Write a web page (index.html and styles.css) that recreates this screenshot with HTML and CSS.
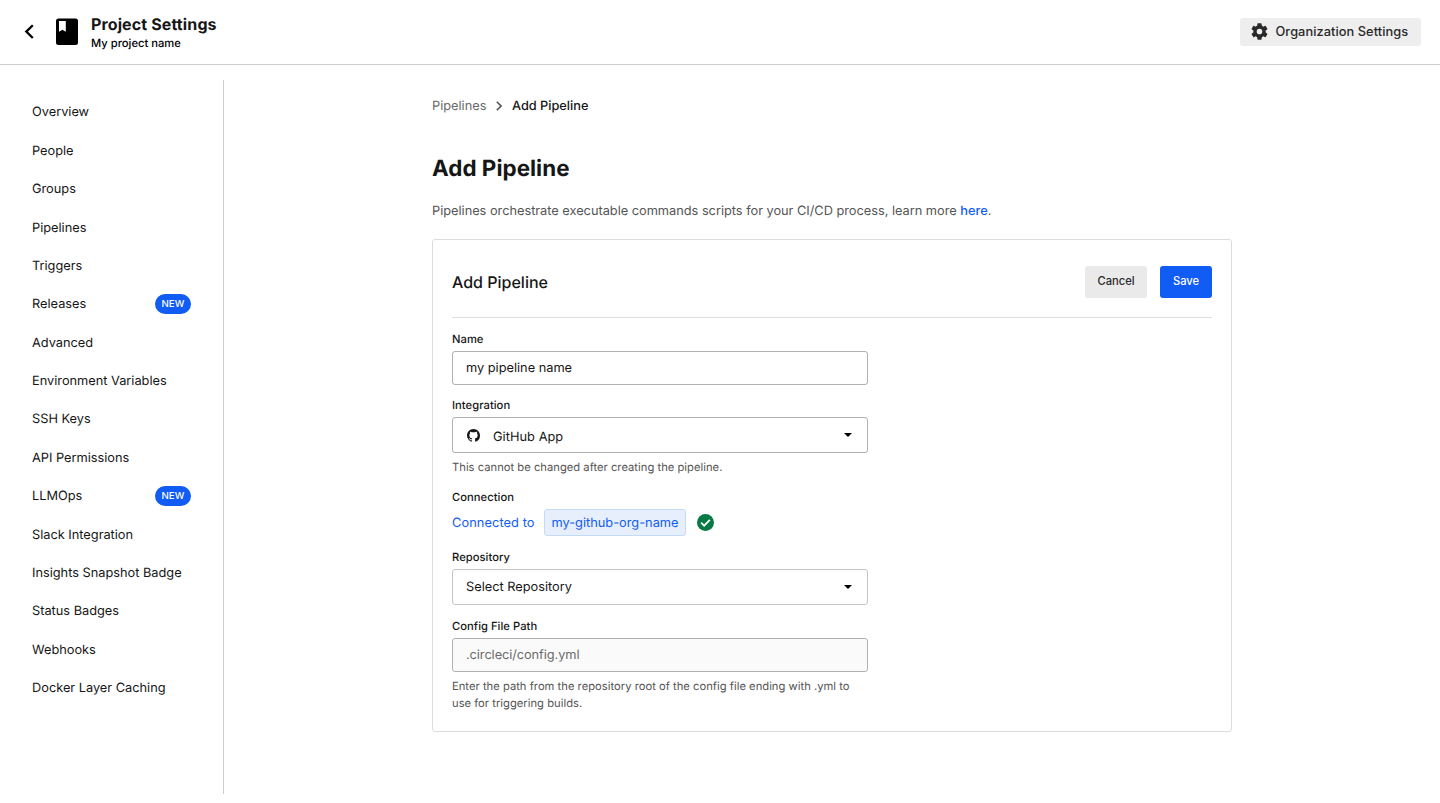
FILE: index.html
```html
<!DOCTYPE html>
<html lang="en">
<head>
<meta charset="utf-8">
<title>Project Settings</title>
<link rel="stylesheet" href="styles.css">
</head>
<body>
<header class="topbar">
  <svg class="back" viewBox="0 0 10 16"><path d="M8.800 1.200 2.300 7.600l6.500 6.400" fill="none" stroke="#000" stroke-width="2.300"/></svg>
  <svg class="book" viewBox="0 0 22 27"><path fill-rule="evenodd" d="M2.500.500h17A2.500 2.500 0 0 1 22 3v21.500a2.500 2.500 0 0 1-2.500 2.500h-17A2.500 2.500 0 0 1 0 24.500V3A2.500 2.500 0 0 1 2.500.500zM3 3v10.800l3.400-2.100 3.400 2.100V3z"/></svg>
  <div class="titles">
    <div class="title">Project Settings</div>
    <div class="subtitle">My project name</div>
  </div>
  <button class="org">
    <svg class="gear" viewBox="2 2 20 20"><path fill="#292929" d="M19.140 12.940c.040-.300.060-.610.060-.940 0-.320-.020-.640-.070-.940l2.030-1.580a.490.490 0 0 0 .120-.610l-1.920-3.320a.488.488 0 0 0-.590-.220l-2.390.960c-.500-.380-1.030-.700-1.620-.940l-.360-2.540a.484.484 0 0 0-.480-.410h-3.840c-.240 0-.430.170-.470.410l-.360 2.540c-.590.240-1.130.570-1.620.940l-2.390-.960c-.220-.080-.470 0-.590.220L2.740 8.870c-.120.210-.080.470.120.610l2.030 1.580c-.050.300-.090.630-.090.940s.020.640.070.940l-2.030 1.580a.490.490 0 0 0-.120.610l1.920 3.320c.120.220.370.290.590.220l2.390-.960c.500.380 1.030.700 1.620.940l.360 2.540c.050.240.240.410.480.410h3.840c.240 0 .440-.170.470-.410l.360-2.540c.590-.240 1.130-.560 1.620-.940l2.390.960c.220.080.470 0 .590-.220l1.920-3.320c.120-.220.070-.470-.120-.610l-2.010-1.580zM12 15.300a3.300 3.300 0 1 1 0-6.600 3.300 3.300 0 0 1 0 6.600z"/></svg>
    <span>Organization Settings</span>
  </button>
</header>
<div class="layout">
  <nav class="sidebar">
    <a class="item">Overview</a>
    <a class="item">People</a>
    <a class="item">Groups</a>
    <a class="item">Pipelines</a>
    <a class="item">Triggers</a>
    <a class="item">Releases<span class="badge">NEW</span></a>
    <a class="item">Advanced</a>
    <a class="item">Environment Variables</a>
    <a class="item">SSH Keys</a>
    <a class="item">API Permissions</a>
    <a class="item">LLMOps<span class="badge">NEW</span></a>
    <a class="item">Slack Integration</a>
    <a class="item">Insights Snapshot Badge</a>
    <a class="item">Status Badges</a>
    <a class="item">Webhooks</a>
    <a class="item">Docker Layer Caching</a>
  </nav>
  <main class="main">
    <div class="crumbs">
      <span class="crumb">Pipelines</span>
      <svg class="chevron" viewBox="0 0 6 10"><path d="M.8.800 5 5 .800 9.200" fill="none" stroke="#555" stroke-width="1.600"/></svg>
      <span class="crumb-current">Add Pipeline</span>
    </div>
    <h1 class="heading">Add Pipeline</h1>
    <p class="intro">Pipelines orchestrate executable commands scripts for your CI/CD process, learn more <a class="link">here</a>.</p>
    <section class="card">
      <div class="card-head">
        <h2 class="card-title">Add Pipeline</h2>
        <button class="btn cancel">Cancel</button>
        <button class="btn save">Save</button>
      </div>
      <div class="form">
        <div class="label">Name</div>
        <div class="field">my pipeline name</div>
        <div class="label gap-12">Integration</div>
        <div class="field select strong">
          <svg class="github" viewBox="0 0 16 16"><path fill="#161616" d="M8 0C3.580 0 0 3.580 0 8c0 3.540 2.290 6.530 5.470 7.590.400.070.550-.170.550-.380 0-.190-.010-.820-.010-1.490-2.010.370-2.530-.490-2.690-.940-.090-.230-.480-.940-.820-1.130-.280-.150-.680-.520-.010-.530.630-.010 1.080.580 1.230.820.720 1.210 1.870.870 2.330.660.070-.520.280-.870.510-1.070-1.780-.200-3.640-.890-3.640-3.950 0-.870.310-1.590.820-2.150-.080-.200-.360-1.020.080-2.120 0 0 .670-.210 2.200.820.640-.180 1.320-.270 2-.270s1.360.090 2 .270c1.530-1.040 2.200-.820 2.200-.820.440 1.100.160 1.920.080 2.120.510.560.820 1.270.820 2.150 0 3.070-1.870 3.750-3.650 3.950.290.250.540.730.540 1.480 0 1.070-.010 1.930-.010 2.200 0 .210.150.460.550.380A8.013 8.013 0 0 0 16 8c0-4.420-3.580-8-8-8z"/></svg>
          <span class="value">GitHub App</span>
          <svg class="caret" viewBox="0 0 8 4"><path d="M0 0h8L4 4z"/></svg>
        </div>
        <div class="help one">This cannot be changed after creating the pipeline.</div>
        <div class="label gap-14">Connection</div>
        <div class="connection">
          <span class="connected">Connected to</span>
          <span class="chip">my-github-org-name</span>
          <svg class="check" viewBox="0 0 16 16"><circle cx="8" cy="8" r="8" fill="#067a42"/><path d="m3.900 8.200 2.800 2.800 5.400-5.500" fill="none" stroke="#fff" stroke-width="1.600"/></svg>
        </div>
        <div class="label gap-13">Repository</div>
        <div class="field select">
          <span class="value">Select Repository</span>
          <svg class="caret" viewBox="0 0 8 4"><path d="M0 0h8L4 4z"/></svg>
        </div>
        <div class="label gap-13">Config File Path</div>
        <div class="field placeholder">.circleci/config.yml</div>
        <div class="help">Enter the path from the repository root of the config file ending with .yml to use for triggering builds.</div>
      </div>
    </section>
  </main>
</div>
</body>
</html>
```
FILE: styles.css
```css
* { box-sizing: border-box; }
body {
  margin: 0;
  height: 803px;
  overflow: hidden;
  background: #fff;
  color: #161616;
  font: 12.8px/20px Inter, "Liberation Sans", sans-serif;
  letter-spacing: -0.015px;
  text-rendering: geometricPrecision;
}
svg { display: block; flex: none; }
button { border: 0; font-family: inherit; letter-spacing: inherit; }
.topbar {
  display: flex;
  align-items: center;
  height: 65px;
  padding: 0 19px 1px 24px;
  border-bottom: 1px solid #ccc;
}
.back { width: 10px; height: 16px; }
.book { width: 22px; height: 27px; margin-left: 22px; }
.titles { margin-left: 13px; padding-top: 2px; }
.title { font-size: 16px; line-height: 20px; font-weight: 700; letter-spacing: 0.12px; }
.subtitle { margin-top: 1px; font-size: 11.2px; line-height: 17px; font-weight: 500; color: #000; letter-spacing: 0.01px; }
.org {
  display: flex;
  align-items: center;
  gap: 7.5px;
  width: 181px;
  height: 28px;
  margin-left: auto;
  padding: 0 0 0 11px;
  border-radius: 3px;
  background: #eee;
  color: #292929;
  font-size: 12.8px;
  font-weight: 500;
  white-space: nowrap;
  letter-spacing: 0.06px;
}
.gear { width: 17px; height: 17px; }
.layout { display: flex; }
.sidebar {
  width: 224px;
  height: 714px;
  margin-top: 15px;
  padding: 14.15px 32px 0;
  border-right: 1px solid #ccc;
}
.item { display: flex; align-items: center; justify-content: space-between; height: 38.4px; white-space: nowrap; }
.badge {
  width: 36px;
  height: 20px;
  margin-bottom: 2.5px;
  border-radius: 10px;
  background: #115cf5;
  color: #fff;
  font-size: 9.6px;
  line-height: 21px;
  font-weight: 500;
  letter-spacing: 0.15px;
  text-align: center;
}
.main { width: 800px; margin-left: 208px; padding-top: 31px; }
.crumbs { display: flex; align-items: center; height: 20px; }
.crumb, .crumb-current { padding-top: 2px; }
.crumb { color: #6a6a6a; }
.chevron { width: 6px; height: 10px; margin: 0 9.5px 0 10px; }
.crumb-current { font-weight: 500; }
.heading { margin: 37px 0 0; font-size: 22.4px; line-height: 32px; font-weight: 700; letter-spacing: 0.03px; }
.intro { margin: 17px 0 0; color: #555; white-space: nowrap; letter-spacing: -0.022px; }
.link { color: #115cf5; font-weight: 500; }
.card {
  height: 493px;
  margin-top: 17px;
  padding: 0 19px;
  border: 1px solid #ddd;
  border-radius: 3px;
}
.card-head { display: flex; align-items: center; height: 78px; padding-top: 6px; border-bottom: 1px solid #ddd; }
.card-title { margin: 0 auto 0 0; font-size: 16px; font-weight: 500; letter-spacing: 0; }
.btn { height: 32px; margin-left: 13px; padding: 0 0 2px; border-radius: 3px; font-size: 11.2px; font-weight: 500; }
.cancel { width: 62px; background: #eaeaea; color: #292929; }
.save { width: 52px; background: #115cf5; color: #fff; }
.form { width: 416px; padding-top: 13px; }
.label { height: 20px; font-size: 11.2px; line-height: 16px; font-weight: 500; letter-spacing: 0.04px; }
.gap-12 { margin-top: 12px; }
.gap-13 { margin-top: 13px; }
.gap-14 { margin-top: 14px; }
.field { height: 34px; padding: 1px 13px 0; border: 1px solid #b0b0b0; border-radius: 3px; line-height: 32px; }
.select { display: flex; align-items: center; height: 36px; border-color: #c5c5c5; padding: 0 15px 0 13px; line-height: 20px; }
.value { padding-top: 2px; }
.strong { border-color: #b0b0b0; }
.strong .value { padding-top: 5px; letter-spacing: 0.04px; }
.github { width: 13px; height: 13px; margin: 0 13px 0 1px; }
.caret { width: 8px; height: 4px; margin-left: auto; }
.help { margin-top: 6px; color: #555; font-size: 11.2px; line-height: 17px; letter-spacing: 0.02px; }
.one { height: 16px; }
.connection { display: flex; align-items: center; height: 27px; color: #115cf5; white-space: nowrap; }
.connected { width: 83px; padding-top: 2px; letter-spacing: 0.08px; }
.chip { width: 142px; height: 27px; margin-left: 9px; padding: 1px 6.500px 0; border: 1px solid #c4dbf8; border-radius: 3px; background: #e7effd; line-height: 25px; letter-spacing: 0; }
.check { width: 17px; height: 17px; margin-left: 11px; }
.placeholder { background: #fafafa; color: #6a6a6a; letter-spacing: -0.08px; }
```
